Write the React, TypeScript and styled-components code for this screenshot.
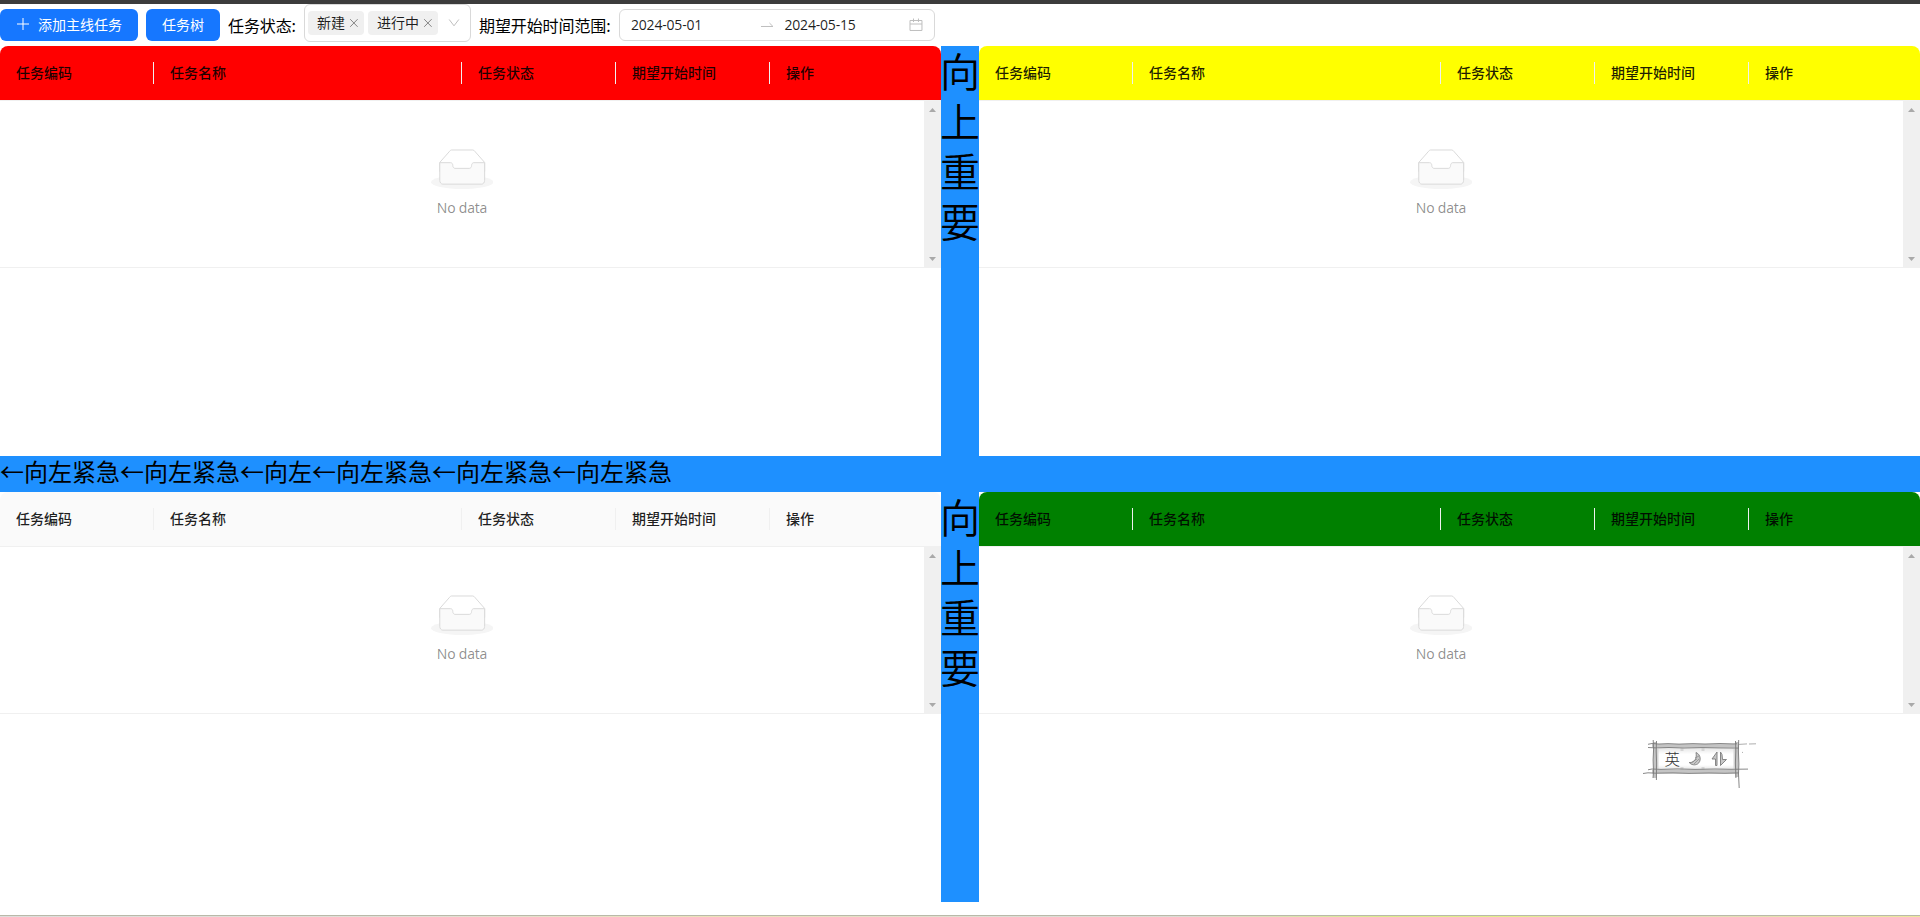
import React from 'react';
import styled, { createGlobalStyle } from 'styled-components';

const GlobalStyle = createGlobalStyle`
  * { box-sizing: border-box; }
  html, body { margin: 0; padding: 0; background: #fff; }
  body {
    overflow: hidden;
    color: #000;
    font-family: 'Open Sans', 'Noto Sans CJK SC', sans-serif;
    font-size: 16px;
  }
`;

const Page = styled.div`
  position: relative;
  display: flex;
  flex-direction: column;
  width: 1920px;
  height: 917px;
  border-top: 4px solid #3c3c3c;
`;

const Toolbar = styled.div`
  display: flex;
  align-items: flex-start;
  gap: 8px;
  height: 42px;
  padding-top: 5px;
`;

const PrimaryButton = styled.button<{ $width: number }>`
  display: flex;
  align-items: center;
  justify-content: center;
  gap: 8px;
  width: ${(p) => p.$width}px;
  height: 32px;
  padding: 0 0 2px;
  border: 0;
  border-radius: 6px;
  background: #1677ff;
  color: #fff;
  font: 14px/22px 'Noto Sans CJK SC', sans-serif;
  white-space: nowrap;
`;

const Label = styled.span<{ $width: number }>`
  width: ${(p) => p.$width}px;
  font: 16px/24px 'Noto Sans CJK SC', sans-serif;
  letter-spacing: -0.1px;
  padding-top: 4px;
  white-space: nowrap;
`;

const Select = styled.div`
  display: flex;
  align-items: center;
  gap: 4px;
  width: 167px;
  height: 38px;
  margin-top: -5px;
  padding: 0 10px 0 3px;
  border: 1px solid #d9d9d9;
  border-radius: 6px;
`;

const Tag = styled.span<{ $width: number }>`
  display: flex;
  align-items: center;
  justify-content: space-between;
  width: ${(p) => p.$width}px;
  height: 24px;
  padding: 0 5px 0 9px;
  border-radius: 4px;
  background: #f0f0f0;
  color: rgba(0, 0, 0, 0.88);
  font: 14px/22px 'Noto Sans CJK SC', sans-serif;
`;

const TagText = styled.span`
  padding-bottom: 3px;
`;

const SelectArrow = styled.svg`
  margin-left: auto;
`;

const RangePicker = styled.div`
  display: flex;
  align-items: center;
  width: 316px;
  height: 32px;
  padding: 0 11px;
  border: 1px solid #d9d9d9;
  border-radius: 6px;
  color: rgba(0, 0, 0, 0.88);
`;

const DateText = styled.span<{ $width: number }>`
  width: ${(p) => p.$width}px;
  font-size: 14px;
  line-height: 22px;
  letter-spacing: -0.2px;
`;

const RangeArrow = styled.svg`
  margin-right: 11px;
`;

const Matrix = styled.div`
  display: grid;
  grid-template-columns: 941px 38px 941px;
  grid-template-rows: 410px 36px 410px;
`;

const VerticalAxis = styled.div`
  background: #1e90ff;
`;

const VerticalText = styled.div`
  margin: -1px -1px 0;
  font: 350 40px/50px 'Noto Sans CJK SC', sans-serif;
  overflow-wrap: anywhere;
`;

const HorizontalAxis = styled.div`
  grid-column: 1 / -1;
  background: #1e90ff;
  font: 24px/30px 'Noto Sans CJK SC', sans-serif;
  white-space: nowrap;
`;

const Table = styled.section`
  background: #fff;
`;

const HeaderRow = styled.div<{ $color: string }>`
  display: grid;
  grid-template-columns: 154px 308px 154px 154px 1fr;
  height: 55px;
  border-bottom: 1px solid #f0f0f0;
  border-radius: 8px 8px 0 0;
  background: ${(p) => p.$color};
`;

const HeaderCell = styled.div`
  display: flex;
  align-items: center;
  justify-content: space-between;
  padding-left: 16px;
  color: rgba(0, 0, 0, 0.88);
  font: 500 14px/22px 'Noto Sans CJK SC', sans-serif;

  &:not(:last-child)::after {
    content: '';
    width: 1px;
    height: 22px;
    background: #f0f0f0;
  }
`;

const HeaderText = styled.span`
  padding-bottom: 3px;
`;

const TableBody = styled.div`
  display: flex;
  height: 167px;
  border-bottom: 1px solid #f0f0f0;
`;

const Empty = styled.div`
  display: flex;
  flex: 1;
  flex-direction: column;
  align-items: center;
  padding-top: 48px;
  color: rgba(0, 0, 0, 0.46);
  font-size: 14px;
  line-height: 22px;
`;

const EmptyText = styled.span`
  margin-top: 8px;
  letter-spacing: -0.2px;
`;

const Scrollbar = styled.div`
  display: flex;
  flex-direction: column;
  align-items: center;
  justify-content: space-between;
  width: 17px;
  padding: 7px 0 6px;
  background: #f0f0f0;
`;

const ImeBar = styled.svg`
  position: absolute;
  left: 1640px;
  top: 732px;
`;

const BottomLine = styled.div`
  height: 2px;
  margin-top: auto;
  border-top: 1px solid #b9b9a9;
  background: linear-gradient(
    90deg,
    #dededc 0%,
    #e2e0d6 22%,
    #ece3b8 38%,
    #dedfd6 52%,
    #dcdcd4 62%,
    #dcec8c 72%,
    #e4ef8a 79%,
    #e0dcc4 85%,
    #ece89c 100%
  );
`;

const CloseIcon = () => (
  <svg width="10" height="10" viewBox="0 0 10 10" fill="none" stroke="#858585">
    <path d="M1.2 1.2l7.4 7.6M8.6 1.2L1.2 8.8" />
  </svg>
);

const EmptyIcon = () => (
  <svg width="62.4" height="40" viewBox="0 0 64 41">
    <g transform="translate(0 1)" fill="none" fillRule="evenodd">
      <ellipse fill="#f5f5f5" cx="32" cy="33" rx="32" ry="7" />
      <g fillRule="nonzero" stroke="#d9d9d9">
        <path d="M55 12.76L44.854 1.258C44.367.474 43.656 0 42.907 0H21.093c-.749 0-1.46.474-1.947 1.257L9 12.761V22h46v-9.24z" />
        <path
          d="M41.613 15.931c0-1.605.994-2.93 2.227-2.931H55v18.137C55 33.26 53.68 35 52.05 35h-40.1C10.32 35 9 33.259 9 31.137V13h11.16c1.233 0 2.227 1.323 2.227 2.928v.022c0 1.605 1.005 2.901 2.237 2.901h14.752c1.232 0 2.237-1.308 2.237-2.913v-.007z"
          fill="#fafafa"
        />
      </g>
    </g>
  </svg>
);

const COLUMNS = ['任务编码', '任务名称', '任务状态', '期望开始时间', '操作'];

const TaskTable = ({ color }: { color: string }) => (
  <Table>
    <HeaderRow $color={color}>
      {COLUMNS.map((name) => (
        <HeaderCell key={name}>
          <HeaderText>{name}</HeaderText>
        </HeaderCell>
      ))}
    </HeaderRow>
    <TableBody>
      <Empty>
        <EmptyIcon />
        <EmptyText>No data</EmptyText>
      </Empty>
      <Scrollbar>
        <svg width="7" height="4" viewBox="0 0 7 4">
          <path d="M0 4L3.500 0 7 4z" fill="#a9a9a9" />
        </svg>
        <svg width="7" height="4" viewBox="0 0 7 4">
          <path d="M0 0l3.500 4L7 0z" fill="#a9a9a9" />
        </svg>
      </Scrollbar>
    </TableBody>
  </Table>
);

const ImportanceAxis = () => (
  <VerticalAxis>
    <VerticalText>向上重要</VerticalText>
  </VerticalAxis>
);

const ImeStatus = () => (
  <ImeBar width="120" height="60" viewBox="0 0 120 60">
    <defs>
      <linearGradient id="panel" x1="0" y1="0" x2="0" y2="1">
        <stop offset="0" stopColor="#e2e2e2" />
        <stop offset="0.3" stopColor="#fff" />
        <stop offset="0.75" stopColor="#fff" />
        <stop offset="1" stopColor="#dedede" />
      </linearGradient>
    </defs>
    <rect x="16" y="11" width="80" height="24" fill="url(#panel)" />
    <path d="M17 13v20M42 12v3M63 12v3M42 31v3M63 31v3M95 13v20" stroke="#d6d6d6" strokeWidth="3" />
    <g stroke="#c4c4c4" strokeWidth="3.6" fill="none">
      <path d="M12 9.8h87M12 35.6h87M15 6v36M97 6v35" />
    </g>
    <g stroke="#7a7a7a" strokeWidth="0.9" fill="none">
      <path d="M8 8.3l4-.8 7 .5 9-.4 11 .5 14-.5 12 .4 15-.5 13 .4 4-.1" />
      <path d="M8 11.5l8 .4 13-.4 15 .5 18-.4 17 .3 20 .2" />
      <path d="M8 33.8l4-.8 9 .4 16-.5 18 .5 20-.4 16 .3 17-.2" />
      <path d="M3 37.5l5-.7 8 .4 17-.3 16 .5 20-.4 16 .3 14-.4" />
      <path d="M13.200 4l.4 9-.5 11 .4 12-.5 6M16.500 5l-.3 10 .4 12-.2 17" />
      <path d="M95.500 5l.3 10-.4 12 .5 15M98.700 4l-.3 11 .5 13-.4 10 .7 14" />
    </g>
    <path d="M99 8.400l8-.5M109 8l7-.2M102 16l1 .8" stroke="#999" strokeWidth="0.8" />
    <text x="24.500" y="28.500" fontSize="15.500" fill="#333" fontFamily="'Noto Sans CJK SC', sans-serif" fontWeight="300">
      英
    </text>
    <g fill="#c8c8c8" stroke="#7c7c7c" strokeWidth="0.9">
      <path d="M56 16.500c5 2 5.500 9 1.500 11.500-2.700 1.500-6 1-8.300-1.500 5 .5 8-3.500 6.800-10z" />
      <path d="M77 16v13.500h-1.500V23H72zM80.500 16v13.500l6-6h-4l-.5-5z" />
    </g>
    <path d="M52 26l5-3M54 28l5-5M55 22l4-2" stroke="#888" strokeWidth="0.7" />
  </ImeBar>
);

export default function App() {
  return (
    <>
      <GlobalStyle />
      <Page>
        <Toolbar>
          <PrimaryButton $width={138}>
            <svg width="14" height="14" viewBox="0 0 14 14" stroke="#fff">
              <path d="M7 1v12M1 7h12" />
            </svg>
            添加主线任务
          </PrimaryButton>
          <PrimaryButton $width={74}>任务树</PrimaryButton>
          <Label $width={68}>任务状态:</Label>
          <Select>
            <Tag $width={56}>
              <TagText>新建</TagText>
              <CloseIcon />
            </Tag>
            <Tag $width={70}>
              <TagText>进行中</TagText>
              <CloseIcon />
            </Tag>
            <SelectArrow width="12" height="12" viewBox="0 0 12 12" fill="none" stroke="#bfbfbf">
              <path d="M1.200 2.500L6 8.800l4.800-6.300" />
            </SelectArrow>
          </Select>
          <Label $width={132}>期望开始时间范围:</Label>
          <RangePicker>
            <DateText $width={129}>2024-05-01</DateText>
            <RangeArrow width="14" height="14" viewBox="0 0 14 14" fill="none" stroke="#bfbfbf">
              <path d="M1 8.500h12L9.500 5" />
            </RangeArrow>
            <DateText $width={125}>2024-05-15</DateText>
            <svg width="14" height="14" viewBox="0 0 14 14" fill="none" stroke="#bfbfbf">
              <path d="M1 2.500h12v10H1zM1 6h12M4.500.5v3.500M9.500.5v3.500" />
            </svg>
          </RangePicker>
        </Toolbar>
        <Matrix>
          <TaskTable color="#ff0000" />
          <ImportanceAxis />
          <TaskTable color="#ffff00" />
          <HorizontalAxis>←向左紧急←向左紧急←向左←向左紧急←向左紧急←向左紧急</HorizontalAxis>
          <TaskTable color="#fafafa" />
          <ImportanceAxis />
          <TaskTable color="#008000" />
        </Matrix>
        <ImeStatus />
        <BottomLine />
      </Page>
    </>
  );
}
